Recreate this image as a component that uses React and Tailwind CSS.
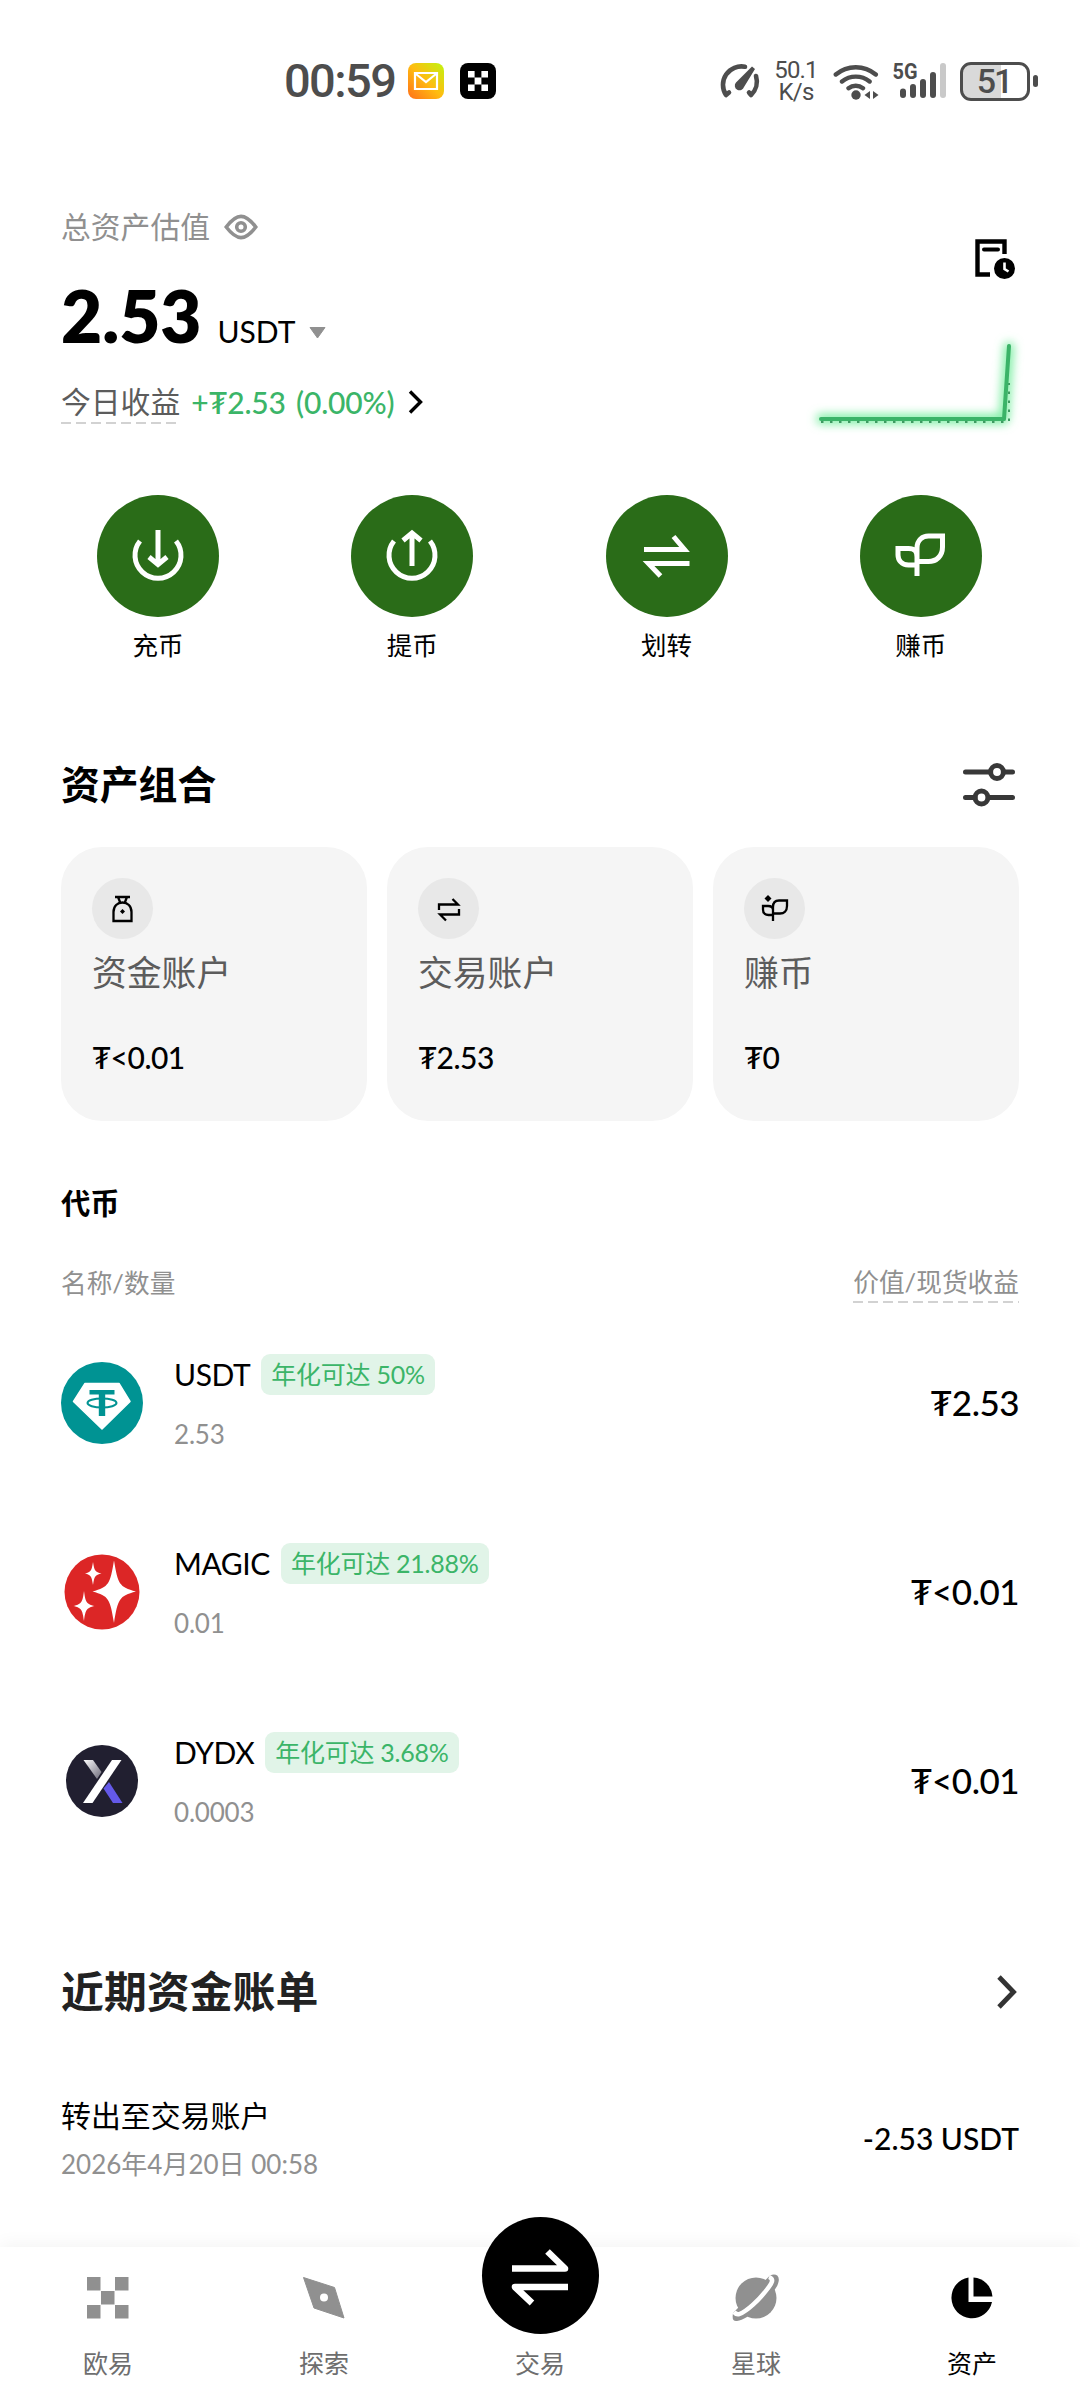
import React from "react";

const actions = [
  { label: "充币", icon: "deposit" },
  { label: "提币", icon: "withdraw" },
  { label: "划转", icon: "transfer" },
  { label: "赚币", icon: "earn" },
];

const accounts = [
  { name: "资金账户", value: "<0.01", icon: "bag" },
  { name: "交易账户", value: "2.53", icon: "swap" },
  { name: "赚币", value: "0", icon: "sprout" },
];

const tokens = [
  { symbol: "USDT", apy: "年化可达 50%", amount: "2.53", value: "2.53" },
  { symbol: "MAGIC", apy: "年化可达 21.88%", amount: "0.01", value: "<0.01" },
  { symbol: "DYDX", apy: "年化可达 3.68%", amount: "0.0003", value: "<0.01" },
];

function StatusBar() {
  return (
    <div className="flex h-[162px] shrink-0 items-center justify-between pr-[42px] pl-[284px] font-[Roboto] text-[#4d4d4d]">
      <div className="flex items-center">
        <span className="w-[124px] text-[47px] leading-[50px] font-medium tracking-[-1.6px]">00:59</span>
        <svg width="36" height="36" viewBox="0 0 36 36">
          <defs>
            <linearGradient id="mail" x1="0" y1="1" x2="1" y2="0">
              <stop offset="0" stopColor="#ff6f1a" />
              <stop offset="0.5" stopColor="#ffbc10" />
              <stop offset="1" stopColor="#c0f510" />
            </linearGradient>
          </defs>
          <rect width="36" height="36" rx="8" fill="url(#mail)" />
          <path d="M7 10H29V26H7ZM8 11L18 19L28 11" fill="none" stroke="#fff" strokeWidth="2.2" />
        </svg>
        <svg width="36" height="36" viewBox="0 0 36 36" className="ml-4">
          <rect width="36" height="36" rx="8" fill="#000" />
          <path d="M8 8h6.6v6.6H8zM21.4 8H28v6.6h-6.6zM14.6 14.6h6.8v6.8h-6.8zM8 21.4h6.6V28H8zM21.4 21.4H28V28h-6.6z" fill="#fff" />
        </svg>
      </div>

      <div className="flex items-center">
        {/* Network speed */}
        <svg width="43" height="38" viewBox="0 0 43 38" fill="none" stroke="#4d4d4d" strokeWidth="4.6" strokeLinecap="round" strokeLinejoin="round">
          <path d="M27 4.7A18.5 18.5 0 0 0 8 33L11 30.5M38 14A18.5 18.5 0 0 1 33 33L31 30.5" />
          <path d="M34 4.5L37 7L26 25A4.7 4.7 0 1 1 18 20.5Z" fill="#4d4d4d" stroke="none" />
        </svg>
        <div className="ml-[13px] flex w-[44px] flex-col items-center text-[24px] leading-[22.5px] tracking-[-0.8px]">
          <span>50.1</span>
          <span>K/s</span>
        </div>
        {/* Wifi */}
        <svg width="48" height="38" viewBox="0 0 48 38" className="ml-[15px]" fill="none" stroke="#4d4d4d" strokeWidth="4.4" strokeLinecap="round">
          <path d="M2.8 12.5A31 31 0 0 1 42.8 12.5M9 19.5A22 22 0 0 1 36.6 19.5M15.5 26.2A12 12 0 0 1 30 26.2" />
          <circle cx="23" cy="33" r="4.7" fill="#4d4d4d" stroke="none" />
          <path d="M37 29V37L31.5 33ZM40 29V37L45.5 33Z" fill="#4d4d4d" stroke="none" />
        </svg>
        {/* Mobile signal */}
        <svg width="56" height="52" viewBox="0 -6 56 52" className="ml-[11px]">
          <text x="0.5" y="17.5" fontFamily="Roboto" fontWeight="700" fontSize="22" textLength="25" lengthAdjust="spacingAndGlyphs" fill="#4d4d4d">5G</text>
          <g stroke="#4d4d4d" strokeWidth="6" strokeLinecap="round">
            <path d="M11 30.5V34M21 26V34M31 21V34M41 14V34" />
            <path d="M51 5V34" stroke="#c9c9c9" />
          </g>
        </svg>
        {/* Battery */}
        <div className="ml-3 flex items-center gap-[3px]">
          <div className="flex h-[39px] w-[70px] items-center justify-center rounded-[11px] border-[3px] border-[#4d4d4d] bg-[linear-gradient(to_right,#d9d9d9_60%,#fff_60%)] pr-0.5 text-[34px] font-medium leading-none tracking-[-2px]">
            51
          </div>
          <div className="h-3 w-[5px] rounded-sm bg-[#4d4d4d]" />
        </div>
      </div>
    </div>
  );
}

function DashedLine() {
  return (
    <span className="block h-0.5 w-full bg-[repeating-linear-gradient(to_right,#d2d2d2_0_10px,transparent_10px_15px)]" />
  );
}

function ProfitChart() {
  return (
    <svg width="210" height="100" viewBox="0 0 210 100" className="overflow-visible" fill="none">
      <defs>
        <filter id="glow" x="-20%" y="-40%" width="140%" height="180%">
          <feGaussianBlur stdDeviation="5" />
        </filter>
      </defs>
      <path d="M12 84H195L200 12" stroke="#7ceea2" strokeWidth="10" strokeLinecap="round" strokeLinejoin="round" filter="url(#glow)" />
      <path d="M12 87H200V48" stroke="#3f9a62" strokeWidth="2" strokeDasharray="2.5 6.5" />
      <path d="M12 84H195L200 11" stroke="#3bb368" strokeWidth="4" strokeLinecap="round" strokeLinejoin="round" />
    </svg>
  );
}

function Overview() {
  return (
    <div className="flex h-[273px] shrink-0 justify-between px-[61px]">
      <div className="flex flex-col pt-[45px]">
        <div className="flex h-10 items-center text-[29.8px] text-[#909090]">
          总资产估值
          <svg width="34" height="26" viewBox="0 0 34 26" className="ml-[14px]" fill="none" stroke="#909090" strokeWidth="3.6">
            <path d="M2.2 13C8 5.5 12.5 2.4 17 2.4S26 5.5 31.8 13C26 20.5 21.5 23.6 17 23.6S8 20.5 2.2 13Z" />
            <circle cx="17" cy="13" r="4.3" />
          </svg>
        </div>

        <div className="mt-[29px] flex h-20 items-baseline leading-[80px]">
          <span className="text-[71px] font-extrabold">2.53</span>
          <span className="ml-[16px] text-[30px]">USDT</span>
          <svg width="17" height="12" viewBox="0 0 17 12" className="ml-[14px] -translate-y-1">
            <path d="M1 0.5H16L8.5 11Z" fill="#909090" stroke="#909090" strokeLinejoin="round" />
          </svg>
        </div>

        <div className="mt-[26px] flex h-[42px] items-start leading-[40px]">
          <div className="mr-[11px] text-[29.8px] text-[#5c5c5c]">
            今日收益
            <DashedLine />
          </div>
          <span className="text-[30px] font-medium tracking-[-0.2px] [word-spacing:3px] text-[#3bb568]">+₮2.53 (0.00%)</span>
          <svg width="16" height="26" viewBox="0 0 16 26" className="mt-[7px] ml-[14px]">
            <path d="M2 2.5L12.5 13L2 23.5" fill="none" stroke="#000" strokeWidth="3.4" />
          </svg>
        </div>
      </div>

      <div className="flex flex-col items-end pt-[77px]">
        <svg width="41" height="41" viewBox="0 0 41 41" className="mr-[3px]" fill="none">
          <path d="M29.5 15V2.5H2.5V35.5H15" stroke="#000" strokeWidth="4.4" />
          <path d="M9 10.5H23" stroke="#000" strokeWidth="4" strokeLinecap="round" />
          <circle cx="29.5" cy="29.5" r="10.5" fill="#000" />
          <path d="M29.5 23.5V30L33.5 32.5" stroke="#fff" strokeWidth="2.6" />
        </svg>
        <div className="mt-[55px]">
          <ProfitChart />
        </div>
      </div>
    </div>
  );
}

function ActionIcon({ name }) {
  return (
    <svg width="60" height="60" viewBox="0 0 60 60" fill="none" stroke="#fff" strokeWidth="5">
      {name === "deposit" && (
        <>
          <path d="M12 15A23 23 0 1 0 48 15" />
          <path d="M30 4V39M21 31L30 38.5L39 31" />
        </>
      )}
      {name === "withdraw" && (
        <>
          <path d="M12 15A23 23 0 1 0 48 15" />
          <path d="M30 40V7M21 14.5L30 7L39 14.5" />
        </>
      )}
      {name === "transfer" && (
        <path d="M7 23.5H47.5L36.5 10.5M52.5 37.5H11.5L23.5 50" />
      )}
      {name === "earn" && (
        <path d="M26 50V22C26 14 31.5 10 37.5 10H51.5V21C51.5 30 45.500 35.5 37.5 35.5H26M26 39H17.5C10.5 39 7 34 7 29V22.5H17.5C23.5 22.5 26 25 26 31" />
      )}
    </svg>
  );
}

function Actions() {
  return (
    <div className="mt-[60px] grid shrink-0 grid-cols-4 pr-[32px] pl-[31px]">
      {actions.map((a) => (
        <div key={a.label} className="flex flex-col items-center">
          <div className="flex h-[122px] w-[122px] items-center justify-center rounded-full bg-[#2a6c18]">
            <ActionIcon name={a.icon} />
          </div>
          <span className="mt-[12px] text-[25.5px] leading-8">{a.label}</span>
        </div>
      ))}
    </div>
  );
}

function AccountIcon({ name }) {
  return (
    <svg width="30" height="30" viewBox="0 0 30 30" fill="none" stroke="#000" strokeWidth="2.3">
      {name === "bag" && (
        <>
          <path d="M7 3H22M10 3L12 8M19 3L17 8M5.5 27V18C5.5 12 9.5 8.5 14.5 8.5S23.5 12 23.5 18V27Z" />
          <path d="M14.5 15L17 17.5L14.5 20L12 17.5Z" fill="#000" stroke="none" />
        </>
      )}
      {name === "swap" && (
        <path d="M5 16V10.5H24L18.5 5M25 15V20.5H6L12 26.5" />
      )}
      {name === "sprout" && (
        <g transform="translate(-1.5 0)">
          <path d="M14.5 27V13C14.5 8 17.5 6.5 20.5 6.5H28.5V12C28.5 17 25.5 19.5 21.5 19.5H14.5M14.5 21H10C6 21 4.5 18.5 4.5 15.5V12H9.5C13 12 14.5 13 14.5 16" />
          <path d="M9.5 1L13 4.5L9.5 8L6 4.5Z" fill="#000" stroke="none" />
        </g>
      )}
    </svg>
  );
}

function Portfolio() {
  return (
    <div className="mt-[93px] shrink-0 px-[61px]">
      <div className="flex h-[60px] items-center justify-between">
        <h2 className="text-[38.8px] font-bold">资产组合</h2>
        <svg width="52" height="44" viewBox="0 0 52 44" className="mr-1 translate-y-px" fill="none" stroke="#383838" strokeWidth="5">
          <path d="M2.5 9H26M41 9H49.5M2.5 34.5H12M26 34.5H49.5" strokeLinecap="round" />
          <circle cx="34" cy="9" r="6.4" />
          <circle cx="18.5" cy="34.5" r="6.4" />
        </svg>
      </div>

      <div className="mt-[33px] grid grid-cols-3 gap-5">
        {accounts.map((a) => (
          <div key={a.name} className="flex h-[274px] flex-col rounded-[41px] bg-[#f5f5f5] px-[31px] pt-[31px]">
            <div className="flex h-[61px] w-[61px] items-center justify-center rounded-full bg-[#e8e8e8]">
              <AccountIcon name={a.icon} />
            </div>
            <span className="mt-[14px] text-[34.8px] leading-10 text-[#5c5c5c]">{a.name}</span>
            <span className="mt-[44px] text-[30px] font-medium leading-10 tracking-[-0.5px]">₮{a.value}</span>
          </div>
        ))}
      </div>
    </div>
  );
}

function TokenLogo({ symbol }) {
  return (
    <svg width="82" height="82" viewBox="0 0 82 82">
      {symbol === "USDT" && (
        <>
          <circle cx="41" cy="41" r="41" fill="#009393" />
          <path d="M24 21.5H58L69 39.5L41 67L12.5 39.5Z" fill="#fff" stroke="#fff" strokeWidth="1.5" strokeLinejoin="round" />
          <path d="M28.5 28H53.5V32.5H44.2V54H37.8V32.5H28.5Z" fill="#009393" />
          <ellipse cx="41" cy="41" rx="14.5" ry="4.5" fill="none" stroke="#009393" strokeWidth="2" />
        </>
      )}
      {symbol === "MAGIC" && (
        <>
          <circle cx="41" cy="41" r="37.5" fill="#dc2626" />
          <g fill="#fff">
            <path d="M53 9.5C57 33 58 36 75 40.5C58 45 57 48 53 72C49 48 48 45 31.5 40.5C48 36 49 33 53 9.5Z" />
            <path d="M32 11C33.5 20 34 21 40.5 22.5C34 24 33.5 25 32 34C30.5 25 30 24 24 22.5C30 21 30.5 20 32 11Z" />
            <path d="M23 40C24.5 52 26 53 33.5 55C26 57 24.5 58 23 70C21.5 58 20 57 12.5 55C20 53 21.5 52 23 40Z" />
          </g>
        </>
      )}
      {symbol === "DYDX" && (
        <>
          <defs>
            <linearGradient id="dydxTop" x1="0" y1="0" x2="1" y2="1">
              <stop offset="0" stopColor="#fff" />
              <stop offset="1" stopColor="#6b6878" />
            </linearGradient>
          </defs>
          <circle cx="41" cy="41" r="36" fill="#211f30" />
          <path d="M22.5 20H32L40.5 32L36 39Z" fill="url(#dydxTop)" />
          <path d="M42.5 48.5L48 42L61.5 63H52Z" fill="#6459e8" />
          <path d="M51 20H60.5L31.5 63H22Z" fill="#fff" />
        </>
      )}
    </svg>
  );
}

function Tokens() {
  return (
    <div className="mt-[62px] shrink-0 px-[61px]">
      <h3 className="text-[29.3px] font-bold leading-10">代币</h3>
      <div className="mt-[41px] flex h-10 items-start justify-between text-[25.7px] leading-[38px] text-[#909090]">
        <span>名称/数量</span>
        <div className="-mt-px">
          价值/现货收益
          <DashedLine />
        </div>
      </div>

      <div className="mt-1">
        {tokens.map((t) => (
          <div key={t.symbol} className="flex h-[189px] items-center">
            <TokenLogo symbol={t.symbol} />
            <div className="ml-[31px] flex flex-col gap-[21px]">
              <div className="flex items-center gap-[11px]">
                <span className="text-[30px] leading-[41px] tracking-[-0.4px]">{t.symbol}</span>
                <span className="h-[41px] rounded-[9px] bg-[#e1f4e8] px-[10px] text-[25px] leading-[41px] tracking-[-0.25px] text-[#3bb568]">{t.apy}</span>
              </div>
              <span className="text-[26px] leading-9 tracking-[-0.2px] text-[#909090]">{t.amount}</span>
            </div>
            <span className="ml-auto text-[35px] font-medium tracking-[-0.5px]">₮{t.value}</span>
          </div>
        ))}
      </div>
    </div>
  );
}

function Bills() {
  return (
    <div className="mt-[87px] shrink-0 px-[61px]">
      <div className="flex h-[60px] items-center justify-between text-[#222]">
        <h2 className="text-[42.9px] font-bold">近期资金账单</h2>
        <svg width="22" height="36" viewBox="0 0 22 36" className="mr-px">
          <path d="M3 3L17.5 18L3 33" fill="none" stroke="#333" strokeWidth="4.8" />
        </svg>
      </div>
      <div className="mt-[73px] flex items-center justify-between">
        <div className="flex flex-col gap-[11px]">
          <span className="text-[29.9px] leading-10">转出至交易账户</span>
          <span className="text-[26px] leading-9 text-[#909090]">2026年4月20日 00:58</span>
        </div>
        <span className="text-[30px] font-medium">-2.53 USDT</span>
      </div>
    </div>
  );
}

function NavBar() {
  return (
    <nav className="mt-auto grid h-[153px] shrink-0 grid-cols-5 bg-white text-[25px] leading-8 text-[#6e6e6e] shadow-[0_-4px_16px_rgba(0,0,0,0.045)]">
      <div className="flex flex-col items-center gap-[28px] pt-[30px]">
        <svg width="42" height="42" viewBox="0 0 42 42" fill="#909090">
          <path d="M0 0h13.5v13.5H0zM28 0h13.5v13.5H28zM14 14h13.5v13.5H14zM0 28h13.5v13.5H0zM28 28h13.5v13.5H28z" />
        </svg>
        欧易
      </div>
      <div className="flex flex-col items-center gap-[28px] pt-[30px]">
        <svg width="42" height="42" viewBox="0 0 42 42">
          <path d="M0.5 0.5L31.5 10.5L41 41L11 31Z" fill="#909090" stroke="#909090" strokeLinejoin="round" />
          <circle cx="21" cy="20.5" r="4" fill="#fff" />
        </svg>
        探索
      </div>
      <div className="relative flex flex-col items-center pt-[100px]">
        <div className="absolute -top-[30px] flex h-[117px] w-[117px] items-center justify-center rounded-full bg-black">
          <svg width="60" height="60" viewBox="0 0 60 60" fill="none" stroke="#fff" strokeWidth="6.6" strokeLinejoin="round">
            <path d="M2 22.5H55L37.5 5.5M58 41H5L22 57" />
          </svg>
        </div>
        交易
      </div>
      <div className="flex flex-col items-center gap-[28px] pt-[30px]">
        <svg width="48" height="48" viewBox="0 0 48 48" className="-my-[3px]" fill="none">
          <path d="M38 1.5C44 -1 48 2 46.5 8C45.5 12 44 14 42 16.5L15 43C11 45.5 8 46.5 5 47C1 47.5 0 45 1 39Z" fill="#909090" />
          <circle cx="24" cy="24" r="20.5" fill="#909090" />
          <path d="M37 3C42.5 5 40 9 35 15.5C27 26 15 37 7.5 40C5.5 40.8 4 40.5 2 38" stroke="#fff" strokeWidth="4.5" />
        </svg>
        星球
      </div>
      <div className="flex flex-col items-center gap-[28px] pt-[30px] text-black">
        <svg width="42" height="42" viewBox="0 0 42 42" fill="#000">
          <path d="M17.5 0.5V25H41A20.5 20.5 0 1 1 17.5 0.5Z" />
          <path d="M22.5 0.5A20.5 20.5 0 0 1 41.5 19.5H22.5Z" />
        </svg>
        资产
      </div>
    </nav>
  );
}

export default function App() {
  return (
    <div className="flex h-[2400px] w-[1080px] flex-col overflow-hidden bg-white font-[Lato,'Noto_Sans_CJK_SC',sans-serif] text-black">
      <StatusBar />
      <Overview />
      <Actions />
      <Portfolio />
      <Tokens />
      <Bills />
      <NavBar />
    </div>
  );
}
